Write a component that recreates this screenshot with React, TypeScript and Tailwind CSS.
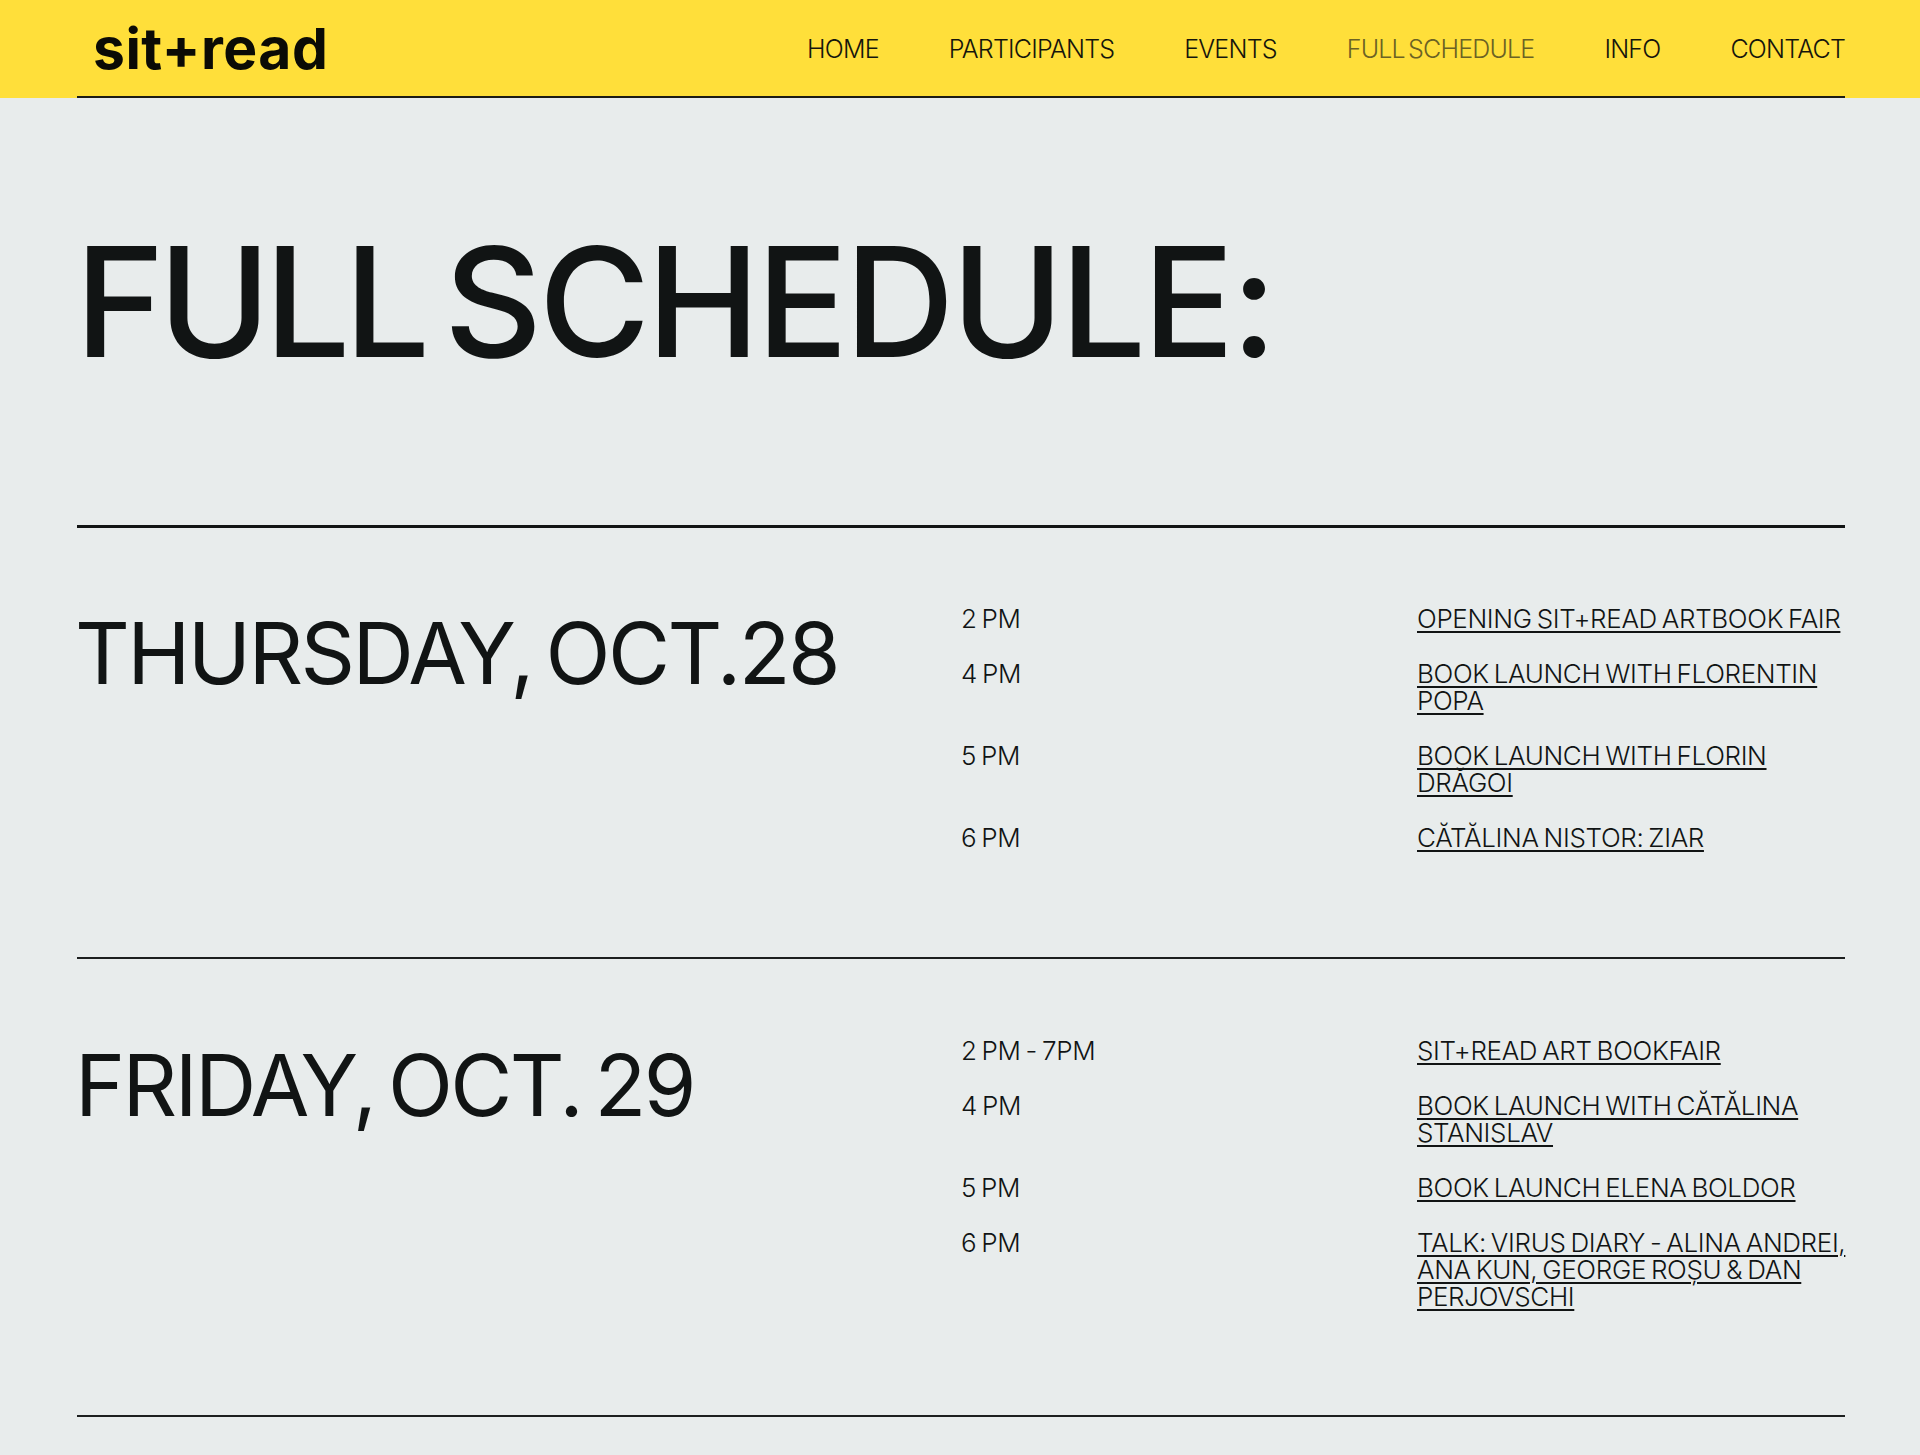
const nav = ["HOME", "PARTICIPANTS", "EVENTS", "FULL SCHEDULE", "INFO", "CONTACT"]

const days = [
  {
    title: "THURSDAY, OCT.28",
    rows: [
      ["2 PM", "OPENING SIT+READ ARTBOOK FAIR"],
      ["4 PM", "BOOK LAUNCH WITH FLORENTIN POPA"],
      ["5 PM", "BOOK LAUNCH WITH FLORIN DRĂGOI"],
      ["6 PM", "CĂTĂLINA NISTOR: ZIAR"],
    ],
  },
  {
    title: "FRIDAY, OCT. 29",
    rows: [
      ["2 PM - 7PM", "SIT+READ ART BOOKFAIR"],
      ["4 PM", "BOOK LAUNCH WITH CĂTĂLINA STANISLAV"],
      ["5 PM", "BOOK LAUNCH ELENA BOLDOR"],
      ["6 PM", "TALK: VIRUS DIARY - ALINA ANDREI, ANA KUN, GEORGE ROȘU & DAN PERJOVSCHI"],
    ],
  },
]

export default function App() {
  return (
    <div className="min-h-[1455px] bg-[#e8ecec] text-[#111414] font-['Inter',sans-serif]">
      <header className="bg-[#ffdf3a] pl-[77px] pr-[75px]">
        <div className="h-[98px] flex items-center justify-between border-b-2 border-[#1c1c14]">
          <div className="pl-[16px] text-[57px] font-bold leading-none tracking-[0.5px] text-[#0b0b05]">sit+read</div>
          <nav className="flex gap-[70px] text-[25px] font-light tracking-[-0.8px] [word-spacing:-3px] pt-[3px]">
            {nav.map(item => (
              <a key={item} className={item === "FULL SCHEDULE" ? "text-[#6b6224]" : "text-[#15150c]"}>{item}</a>
            ))}
          </nav>
        </div>
      </header>

      <main className="pl-[77px] pr-[75px]">
        <h1 className="h-[430px] pt-[128px] text-[152px] font-[450] leading-none tracking-[-3.4px] [word-spacing:-17px] border-b-[3px] border-[#111414]">
          <span className="-ml-[2px] inline-block tracking-[-6.3px]">FULL</span> SCHEDULE:
        </h1>

        {days.map((day, i) => (
          <section
            key={day.title}
            className={`flex border-b-2 border-[#1c1f1f] ${i === 0 ? "h-[431px] pt-[77px]" : "h-[458px] pt-[78px]"}`}
          >
            <h2 className="w-[884px] shrink-0 text-[85px] font-normal leading-none tracking-[-2.6px] [word-spacing:-8px] -ml-[2px] mr-[2px] mt-[6px]">{day.title}</h2>
            <div className="flex-1 flex flex-col gap-[28px]">
              {day.rows.map(([time, label]) => (
                <div key={time} className="flex text-[26px] font-light leading-[27px] tracking-[-0.35px] [word-spacing:-2px]">
                  <div className="w-[456px] shrink-0">{time}</div>
                  <a className="flex-1 -mr-[12px] underline decoration-2 underline-offset-[3px]">{label}</a>
                </div>
              ))}
            </div>
          </section>
        ))}
      </main>
    </div>
  )
}
